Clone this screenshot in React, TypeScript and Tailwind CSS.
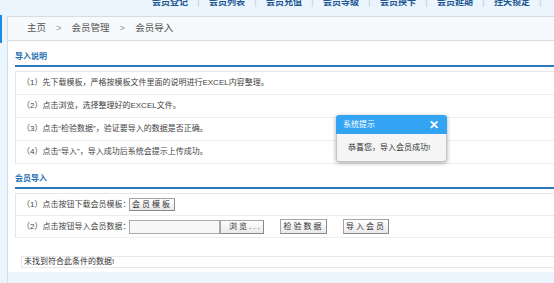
const navItems = ["会员登记", "会员列表", "会员充值", "会员等级", "会员换卡", "会员延期", "挂失锁定"];

const notes = [
  "（1）先下载模板，严格按模板文件里面的说明进行EXCEL内容整理。",
  "（2）点击浏览，选择整理好的EXCEL文件。",
  "（3）点击“检验数据”，验证要导入的数据是否正确。",
  "（4）点击“导入”，导入成功后系统会提示上传成功。",
];

function Btn({ label, className = "" }: { label: string; className?: string }) {
  return (
    <button
      className={
        "flex items-center border border-[#a5a5a5] border-b-[#8a8a8a] border-r-[#8a8a8a] bg-gradient-to-b from-white to-[#e9e9e9] text-[8px] tracking-[2px] text-[#333] " +
        className
      }
    >
      {label}
    </button>
  );
}

function TopNav() {
  return (
    <div className="h-[16px] overflow-hidden pl-[145px]">
      <div className="-mt-[4px] flex items-center text-[9px] font-bold leading-[12px] text-[#1d5592]">
        {navItems.map((item) => (
          <div key={item} className="flex items-center">
            <span className="w-[36px] whitespace-nowrap">{item}</span>
            <span className="w-[21px] text-center font-normal text-[#c2cbd4]">|</span>
          </div>
        ))}
      </div>
    </div>
  );
}

function SectionTitle({ title, top }: { title: string; top: string }) {
  return (
    <div className={top}>
      <div className="text-[8px] font-bold leading-[14px] text-[#1f6fb6]">{title}</div>
      <div className="mt-[1px] h-[2px] bg-[#2a79bb]" />
    </div>
  );
}

export default function App() {
  return (
    <div className="relative flex h-[283px] w-[554px] overflow-hidden bg-[#eaf5fd] font-['Liberation_Sans','Noto_Sans_CJK_SC',sans-serif] text-[#444]">
      <div className="w-[7px] shrink-0 pt-[15px]">
        <div className="h-[28px] w-[2px] bg-[#1b8ce2]" />
      </div>

      <div className="flex min-w-0 flex-1 flex-col">
        <TopNav />

        <div className="flex flex-1 flex-col border-l border-t border-[#d5dce3]">
          <div className="flex h-[24px] items-center gap-[10px] border-b border-[#dadde0] bg-[#f6fafd] pl-[19px] text-[9.5px] text-[#555]">
            <span>主页</span>
            <span className="text-[#999]">&gt;</span>
            <span>会员管理</span>
            <span className="text-[#999]">&gt;</span>
            <span>会员导入</span>
          </div>

          <div className="h-[231px] shrink-0 bg-white pl-[7px]">
            <SectionTitle title="导入说明" top="pt-[9px]" />
            <div className="mt-[4px] border-l border-t border-[#e6e6e6]">
              {notes.map((n) => (
                <div key={n} className="flex h-[23px] items-center border-b border-[#ececec] pl-[6px] text-[8px] whitespace-nowrap">
                  {n}
                </div>
              ))}
            </div>

            <SectionTitle title="会员导入" top="pt-[8px]" />
            <div className="mt-[4px] border-l border-t border-[#e6e6e6]">
              <div className="flex h-[22px] items-center border-b border-[#ececec] pl-[6px] text-[8px]">
                <span className="w-[107px] whitespace-nowrap">（1）点击按钮下载会员模板：</span>
                <Btn label="会员模板" className="h-[13px] w-[46px] justify-center" />
              </div>
              <div className="flex h-[22px] items-center border-b border-[#ececec] pl-[6px] text-[8px]">
                <span className="w-[107px] whitespace-nowrap">（2）点击按钮导入会员数据：</span>
                <div className="h-[14px] w-[91px] border border-[#aaa] bg-[#f7f7f7]" />
                <Btn label="浏览..." className="h-[14px] w-[44px] pl-[8px] tracking-[1px]" />
                <Btn label="检验数据" className="ml-[16px] h-[15px] w-[47px] justify-center" />
                <Btn label="导入会员" className="ml-[16px] h-[15px] w-[46px] justify-center" />
              </div>
            </div>

            <div className="ml-[6px] mt-[18px] flex h-[12px] items-center border-y border-l border-[#e8e8e8] pl-[2px] text-[8px] text-[#333]">
              未找到符合此条件的数据!
            </div>
          </div>
        </div>
      </div>

      <div className="absolute left-[336px] top-[115px] w-[111px] rounded-[3px] shadow-[0_1px_4px_rgba(0,0,0,0.35)]">
        <div className="flex h-[19px] items-center justify-between rounded-t-[3px] bg-[#33a3f3] pl-[7px] pr-[8px] text-[8px] text-white">
          <span>系统提示</span>
          <span className="text-[12px] font-bold leading-none">✕</span>
        </div>
        <div className="flex h-[28px] items-center rounded-b-[3px] border border-t-0 border-[#c4c4c4] bg-[#f5f5f5] pl-[11px] text-[8px] text-[#333]">
          恭喜您，导入会员成功!
        </div>
      </div>
    </div>
  );
}
